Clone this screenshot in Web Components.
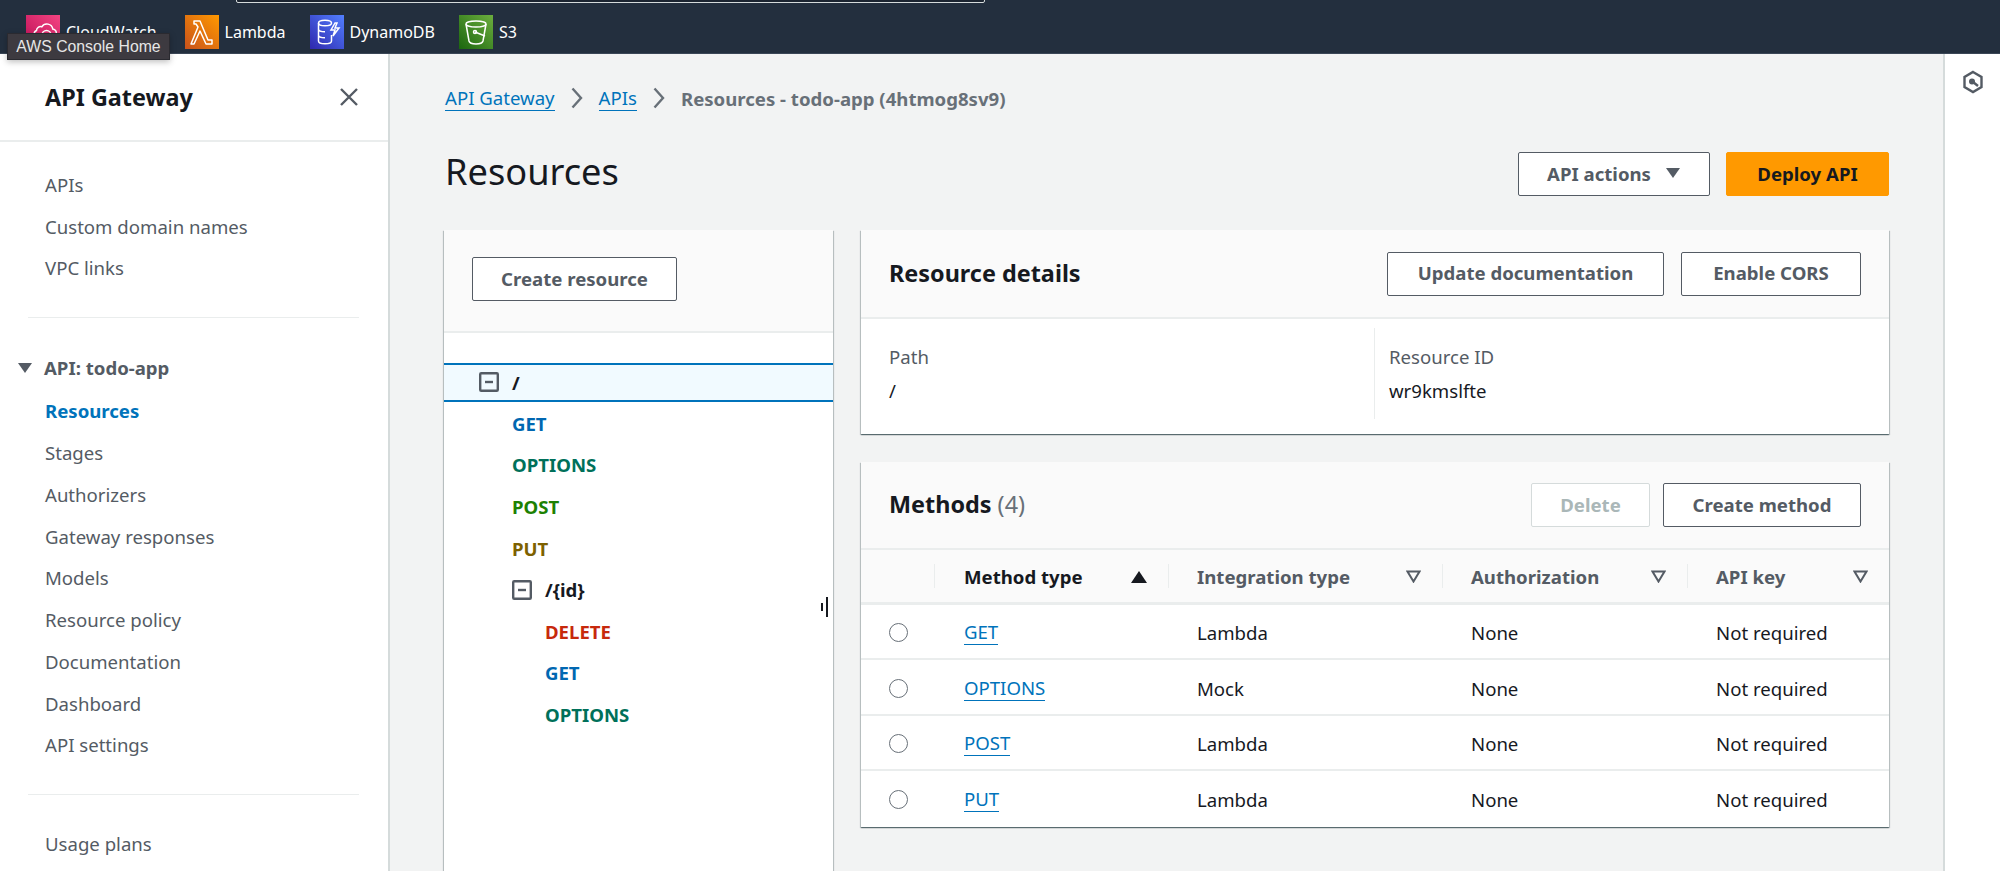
<!DOCTYPE html>
<html lang="en">
<head>
<meta charset="utf-8">
<title>Resources - API Gateway</title>
<style>
  html, body { margin: 0; height: 871px; overflow: hidden; }
  body { font-family: "Noto Sans", "Open Sans", sans-serif; font-size: 18.600px; color: #16191f; background: #f2f3f3; }
</style>
</head>
<body>
<aws-console>
  <aws-topbar slot="top">
    <service-link label="CloudWatch" kind="cloudwatch" style="margin-right:28px"></service-link>
    <service-link label="Lambda" kind="lambda"></service-link>
    <service-link label="DynamoDB" kind="dynamodb"></service-link>
    <service-link label="S3" kind="s3"></service-link>
  </aws-topbar>
  <side-nav slot="nav"></side-nav>
  <resources-page slot="main"></resources-page>
  <tools-rail slot="rail"></tools-rail>
</aws-console>

<script>
const caret = (fill) => `<svg width="16" height="12" viewBox="0 0 16 12"><path d="M1 1h14L8 11z" fill="${fill}"/></svg>`;
const cardShadow = "0 1px 1px 0 rgba(0, 28, 36, .45), 1px 1px 1px 0 rgba(0, 28, 36, .18), -1px 1px 1px 0 rgba(0, 28, 36, .18)";

class AwsConsole extends HTMLElement {
  constructor() {
    super();
    this.attachShadow({ mode: "open" }).innerHTML = `
      <style>
        :host { display: grid; grid-template-columns: 390px 1fr 57px; grid-template-rows: 54px 817px; height: 871px; position: relative; }
        .top { grid-column: 1 / -1; display: block; }
        .tip {
          position: absolute; left: 7px; top: 33px; width: 163px; height: 27px; box-sizing: border-box;
          display: flex; align-items: center; justify-content: center;
          background: #3d3a40; border: 1px solid #2a2a30; color: #e6e6e6;
          font: 15.800px/1 "Liberation Sans", Arial, sans-serif; box-shadow: 0 2px 6px rgba(0, 0, 0, .25);
        }
      </style>
      <div class="top"><slot name="top"></slot></div>
      <slot name="nav"></slot>
      <slot name="main"></slot>
      <slot name="rail"></slot>
      <div class="tip">AWS Console Home</div>`;
  }
}

class AwsTopbar extends HTMLElement {
  constructor() {
    super();
    this.attachShadow({ mode: "open" }).innerHTML = `
      <style>
        :host { display: block; height: 54px; background: #232f3e; position: relative; box-shadow: inset 0 -1px 0 #3a4656; }
        .search { position: absolute; left: 236px; top: -10px; width: 749px; height: 13px; box-sizing: border-box; border: 1px solid #d5dbdb; border-radius: 2px; background: #1b2430; }
        .links { display: flex; padding: 15px 0 0 26px; }
      </style>
      <div class="search"></div>
      <div class="links"><slot></slot></div>`;
  }
}

const serviceIcons = {
  cloudwatch: {
    bg: ["#bd0f56", "#f34482"],
    art: `<path d="M10 23h15a4.500 4.500 0 0 0 .8-8.900 6 6 0 0 0-11-2.300 4 4 0 0 0-5.300 3.700A4 4 0 0 0 10 23z"/><circle cx="19.500" cy="20" r="4.500" fill="#e0306f"/><path d="M22.500 23.500l3 3"/>`,
  },
  lambda: {
    bg: ["#c8511b", "#ff9900"],
    art: `<path d="M8 6h6l8 19h4v4h-6l-6-13-6 13H5l7-17-2-3H8z" stroke-linejoin="round"/>`,
  },
  dynamodb: {
    bg: ["#2e27ad", "#527fff"],
    art: `<ellipse cx="14" cy="8" rx="6.500" ry="2.800"/><path d="M7.500 8v18c0 1.600 3 2.800 6.500 2.800s6.500-1.200 6.500-2.800V20M7.500 14c0 1.600 3 2.800 6.500 2.800M7.500 20c0 1.600 3 2.800 6.500 2.800"/><path d="M24 8l-4 7h4l-2 6 6-8h-4l2-5z"/>`,
  },
  s3: {
    bg: ["#1b660f", "#6cae3e"],
    art: `<ellipse cx="16" cy="9" rx="10" ry="3"/><path d="M6 9l3 17c.500 2 3.500 3 7 3s6.500-1 7-3l3-17"/><path d="M15 17l10 4"/><circle cx="15" cy="17" r="1.500"/>`,
  },
};

class ServiceLink extends HTMLElement {
  constructor() {
    super();
    this.attachShadow({ mode: "open" });
  }

  connectedCallback() {
    const label = this.getAttribute("label");
    const kind = this.getAttribute("kind");
    const icon = serviceIcons[kind];
    this.shadowRoot.innerHTML = `
      <style>
        :host { display: flex; align-items: center; gap: 6px; height: 34px; margin-right: 24px; color: #fff; font-size: 16px; white-space: nowrap; }
        svg { display: block; flex: none; }
      </style>
      <svg width="34" height="34" viewBox="0 0 34 34">
        <defs><linearGradient id="g" x1="0" y1="1" x2="1" y2="0">
          <stop offset="0" stop-color="${icon.bg[0]}"/><stop offset="1" stop-color="${icon.bg[1]}"/>
        </linearGradient></defs>
        <rect width="34" height="34" fill="url(#g)"/>
        <g fill="none" stroke="#fff" stroke-width="1.500" transform="translate(1 0)">${icon.art}</g>
      </svg>
      <span>${label}</span>`;
  }
}

class SideNav extends HTMLElement {
  constructor() {
    super();
    const links = (items) => items
      .map((t) => `<a class="${t === "Resources" ? "active" : ""}">${t}</a>`)
      .join("");
    this.attachShadow({ mode: "open" }).innerHTML = `
      <style>
        :host { display: block; background: #fff; border-right: 2px solid #d5dbdb; box-sizing: border-box; width: 390px; height: 817px; overflow: hidden; color: #545b64; }
        header { height: 88px; box-sizing: border-box; border-bottom: 2px solid #eaeded; display: flex; align-items: center; justify-content: space-between; padding: 0 29px 0 45px; }
        h2 { margin: 0; font-size: 23.400px; font-weight: 700; color: #16191f; }
        a { display: block; height: 41.750px; line-height: 41.750px; padding-left: 45px; }
        a.active { color: #0073bb; font-weight: 700; }
        .first { padding-top: 22px; }
        .first a { height: 41.600px; line-height: 41.600px; }
        hr { border: 0; border-top: 1px solid #eaeded; margin: 28px 29px 29px 28px; }
        hr.last { margin-bottom: 28px; }
        .group { display: flex; align-items: center; height: 41.600px; padding-left: 17px; gap: 11px; font-weight: 700; margin-bottom: 2px; }
      </style>
      <header>
        <h2>API Gateway</h2>
        <svg width="20" height="20" viewBox="0 0 20 20"><path d="M2 2l16 16M18 2L2 18" stroke="#545b64" stroke-width="2.400" fill="none"/></svg>
      </header>
      <div class="first">${links(["APIs", "Custom domain names", "VPC links"])}</div>
      <hr>
      <div class="group">${caret("#545b64")}<span>API: todo-app</span></div>
      ${links(["Resources", "Stages", "Authorizers", "Gateway responses", "Models", "Resource policy", "Documentation", "Dashboard", "API settings"])}
      <hr class="last">
      ${links(["Usage plans"])}`;
  }
}

class AwsButton extends HTMLElement {
  constructor() {
    super();
    this.attachShadow({ mode: "open" }).innerHTML = `
      <style>
        :host {
          display: inline-flex; align-items: center; justify-content: center; gap: 14px; box-sizing: border-box; height: 44px;
          padding-bottom: 2px; background: #fff; border: 1.500px solid #545b64; border-radius: 2px;
          color: #545b64; font-size: 18.600px; font-weight: 700; white-space: nowrap;
        }
        :host([variant="primary"]) { background: #ff9900; border-color: #ff9900; color: #16191f; }
        :host([disabled]) { border-color: #d5dbdb; color: #aab7b8; }
      </style>
      <slot></slot>`;
  }
}

class PanelCard extends HTMLElement {
  constructor() {
    super();
    this.attachShadow({ mode: "open" }).innerHTML = `
      <style>
        :host { display: block; background: #fff; box-shadow: ${cardShadow}; }
        header { display: flex; align-items: center; justify-content: space-between; height: var(--head-height, 89px); box-sizing: border-box; padding: 0 28px; background: #fafafa; border-bottom: 2px solid #eaeded; }
        h3 { margin: 0 0 2px; font-size: 23.400px; font-weight: 700; color: #16191f; }
        .actions { display: flex; gap: 13px; }
      </style>
      <header>
        <h3><slot name="title"></slot></h3>
        <div class="actions"><slot name="actions"></slot></div>
      </header>
      <slot></slot>`;
  }
}

class ResourceTree extends HTMLElement {
  constructor() {
    super();
    const toggle = `<svg width="20" height="20" viewBox="0 0 20 20"><rect x="1.200" y="1.200" width="17.600" height="17.600" rx="1" fill="none" stroke="#545b64" stroke-width="2.400"/><path d="M6 10h8" stroke="#545b64" stroke-width="2.400"/></svg>`;
    const method = (name, indent) => `<div class="row ${name.toLowerCase()}" style="padding-left:${indent}px">${name}</div>`;
    this.attachShadow({ mode: "open" }).innerHTML = `
      <style>
        :host { display: block; position: relative; width: 389px; height: 641px; background: #fff; box-shadow: ${cardShadow}; font-weight: 700; }
        .head { height: 103px; box-sizing: border-box; padding: 27px 0 0 28px; background: #fafafa; border-bottom: 2px solid #eaeded; margin-bottom: 29.500px; }
        aws-button { width: 205px; }
        .row { display: flex; align-items: center; gap: 13px; height: 41.600px; box-sizing: border-box; color: #16191f; }
        .sel { height: 39px; margin-bottom: 1px; background: #f1faff; border-top: 2px solid #0073bb; border-bottom: 2px solid #0073bb; padding-left: 35px; }
        .get { color: #0067b1; }
        .options { color: #00705a; }
        .post { color: #1d8102; }
        .put { color: #7d6100; }
        .delete { color: #c7290c; }
        .grip { position: absolute; left: 376px; top: 367px; width: 8px; height: 20px; }
      </style>
      <div class="head"><aws-button>Create resource</aws-button></div>
      <div class="row sel">${toggle}<span>/</span></div>
      ${method("GET", 68)}${method("OPTIONS", 68)}${method("POST", 68)}${method("PUT", 68)}
      <div class="row" style="padding-left:68px">${toggle}<span>/{id}</span></div>
      ${method("DELETE", 101)}${method("GET", 101)}${method("OPTIONS", 101)}
      <svg class="grip" viewBox="0 0 8 20"><path d="M1 6h2v8H1zM6 0h2v20H6z" fill="#16191f"/></svg>`;
  }
}

class DetailsGrid extends HTMLElement {
  constructor() {
    super();
    this.attachShadow({ mode: "open" }).innerHTML = `
      <style>
        :host { display: grid; grid-template-columns: 513px 1fr; height: 115px; box-sizing: border-box; padding: 9px 0 15px; }
        div { padding: 12px 28px 0; line-height: 34px; }
        div + div { border-left: 1px solid #eaeded; padding-left: 14px; }
        span { display: block; color: #545b64; }
      </style>
      <div><span>Path</span>/</div>
      <div><span>Resource ID</span>wr9kmslfte</div>`;
  }
}

class MethodsTable extends HTMLElement {
  constructor() {
    super();
    const rows = [
      ["GET", "Lambda"],
      ["OPTIONS", "Mock"],
      ["POST", "Lambda"],
      ["PUT", "Lambda"],
    ];
    const sort = `<svg width="15" height="13" viewBox="0 0 15 13"><path d="M1.500 1.500h12L7.500 11.500z" fill="none" stroke="#545b64" stroke-width="2"/></svg>`;
    const up = `<svg width="16" height="13" viewBox="0 0 16 13"><path d="M0 13h16L8 1z" fill="#16191f"/></svg>`;
    const th = (text, icon, cls) => `<div class="th ${cls || ""}"><span>${text}</span>${icon}</div>`;
    this.attachShadow({ mode: "open" }).innerHTML = `
      <style>
        :host { display: block; color: #16191f; }
        .grid { display: grid; grid-template-columns: 74px 233px 274px 245px 202px; }
        .hrow, .row { display: contents; }
        .th { height: 55px; box-sizing: border-box; background: #fafafa; border-bottom: 3px solid #eaeded; display: flex; align-items: center; justify-content: space-between; padding: 0 21px 0 29px; font-weight: 700; color: #545b64; position: relative; }
        .th.sorted { color: #16191f; }
        .th + .th::before { content: ""; position: absolute; left: 0; top: 14px; bottom: 14px; border-left: 1px solid #eaeded; }
        .th:nth-child(2)::before { left: -1px; }
        .td { height: 55.400px; box-sizing: border-box; display: flex; align-items: center; padding: 2px 0 0 29px; border-bottom: 2px solid #eaeded; }
        .row:last-child .td { border-bottom: 0; }
        .radio { padding-left: 28px; }
        .radio i { width: 17px; height: 17px; border: 1.500px solid #687078; border-radius: 50%; display: block; }
        a { color: #0073bb; border-bottom: 1.500px solid #0073bb; line-height: 24px; }
      </style>
      <div class="grid">
        <div class="hrow">
          <div class="th"></div>
          ${th("Method type", up, "sorted")}
          ${th("Integration type", sort)}
          ${th("Authorization", sort)}
          ${th("API key", sort)}
        </div>
        ${rows.map((r) => `
          <div class="row">
            <div class="td radio"><i></i></div>
            <div class="td"><a>${r[0]}</a></div>
            <div class="td">${r[1]}</div>
            <div class="td">None</div>
            <div class="td">Not required</div>
          </div>`).join("")}
      </div>`;
  }
}

class ResourcesPage extends HTMLElement {
  constructor() {
    super();
    const chevron = `<svg width="12" height="22" viewBox="0 0 12 22"><path d="M1.500 1.500L10 11l-8.500 9.500" fill="none" stroke="#687078" stroke-width="2.400"/></svg>`;
    this.attachShadow({ mode: "open" }).innerHTML = `
      <style>
        :host { display: block; min-width: 0; padding: 29px 54px 0 54px; height: 817px; box-sizing: border-box; overflow: hidden; background: #f2f3f3; }
        .crumbs { display: flex; align-items: center; gap: 16px; height: 30px; padding-left: 1px; }
        .crumbs a { color: #0073bb; border-bottom: 1.500px solid #0073bb; line-height: 25px; }
        .crumbs b { color: #687078; }
        .title { display: flex; align-items: center; justify-content: space-between; height: 44px; margin-top: 39px; padding-left: 1px; }
        h1 { margin: 0 0 7px; font-size: 36.200px; font-weight: 400; line-height: 44px; color: #16191f; }
        .actions { display: flex; gap: 16px; }
        .split { display: flex; gap: 28px; margin-top: 34px; align-items: flex-start; }
        .stack { flex: 1; min-width: 0; display: flex; flex-direction: column; gap: 28px; }
        .methods { --head-height: 88px; }
      </style>
      <nav class="crumbs"><a>API Gateway</a>${chevron}<a>APIs</a>${chevron}<b>Resources - todo-app (4htmog8sv9)</b></nav>
      <div class="title">
        <h1>Resources</h1>
        <div class="actions">
          <aws-button style="width:192px">API actions ${caret("#545b64")}</aws-button>
          <aws-button variant="primary" style="width:163px">Deploy API</aws-button>
        </div>
      </div>
      <div class="split">
        <resource-tree></resource-tree>
        <div class="stack">
          <panel-card>
            <span slot="title">Resource details</span>
            <aws-button slot="actions" style="width:277px">Update documentation</aws-button>
            <aws-button slot="actions" style="width:180px;margin-left:4px">Enable CORS</aws-button>
            <details-grid></details-grid>
          </panel-card>
          <panel-card class="methods">
            <span slot="title">Methods <span style="font-weight:400;color:#687078">(4)</span></span>
            <aws-button slot="actions" disabled style="width:119px">Delete</aws-button>
            <aws-button slot="actions" style="width:198px">Create method</aws-button>
            <methods-table></methods-table>
          </panel-card>
        </div>
      </div>`;
  }
}

class ToolsRail extends HTMLElement {
  constructor() {
    super();
    this.attachShadow({ mode: "open" }).innerHTML = `
      <style>
        :host { display: flex; justify-content: center; background: #fff; border-left: 2px solid #d5dbdb; box-sizing: border-box; padding-top: 16px; }
        svg { display: block; }
      </style>
      <svg width="22" height="24" viewBox="0 0 22 24">
        <path d="M11 2l8.500 5v10L11 22l-8.500-5V7z" fill="none" stroke="#545b64" stroke-width="2.400"/>
        <circle cx="10" cy="11.500" r="3" fill="#545b64"/>
        <path d="M11 12l5 4" stroke="#545b64" stroke-width="2.400"/>
      </svg>`;
  }
}

customElements.define("aws-console", AwsConsole);
customElements.define("aws-topbar", AwsTopbar);
customElements.define("service-link", ServiceLink);
customElements.define("side-nav", SideNav);
customElements.define("aws-button", AwsButton);
customElements.define("panel-card", PanelCard);
customElements.define("resource-tree", ResourceTree);
customElements.define("details-grid", DetailsGrid);
customElements.define("methods-table", MethodsTable);
customElements.define("resources-page", ResourcesPage);
customElements.define("tools-rail", ToolsRail);
</script>
</body>
</html>
